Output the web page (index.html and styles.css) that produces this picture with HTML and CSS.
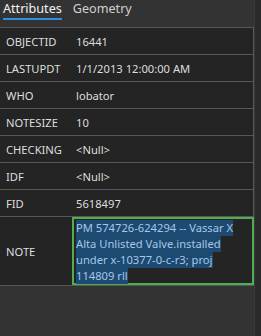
FILE: index.html
```html
<!DOCTYPE html>
<html>
<head>
<meta charset="utf-8">
<link rel="stylesheet" href="styles.css">
</head>
<body>
<div class="frame">
  <div class="main">
    <div class="tabs">
      <div class="tab active">Attributes</div>
      <div class="tab">Geometry</div>
    </div>
    <div class="table">
      <div class="row"><div class="key">OBJECTID</div><div class="val">16441</div></div>
      <div class="row"><div class="key">LASTUPDT</div><div class="val">1/1/2013 12:00:00 AM</div></div>
      <div class="row"><div class="key">WHO</div><div class="val">lobator</div></div>
      <div class="row"><div class="key">NOTESIZE</div><div class="val">10</div></div>
      <div class="row"><div class="key">CHECKING</div><div class="val">&lt;Null&gt;</div></div>
      <div class="row"><div class="key">IDF</div><div class="val">&lt;Null&gt;</div></div>
      <div class="row"><div class="key">FID</div><div class="val">5618497</div></div>
      <div class="row note-row">
        <div class="key">NOTE</div>
        <div class="editor">
          <div class="line"><span class="sel">PM 574726-624294 -- Vassar X</span></div>
          <div class="line"><span class="sel">Alta Unlisted Valve.installed</span></div>
          <div class="line"><span class="sel">under x-10377-0-c-r3; proj</span></div>
          <div class="line"><span class="sel">114809 rll</span></div>
        </div>
      </div>
    </div>
  </div>
  <div class="scroll"></div>
</div>
</body>
</html>
```
FILE: styles.css
```css
html, body {
  margin: 0;
  padding: 0;
  background: #333333;
  font-family: "Noto Sans", "Open Sans", sans-serif;
  color: #dedede;
}
.frame {
  display: flex;
  width: 261px;
  height: 336px;
}
.main {
  width: 254px;
}
.scroll {
  width: 7px;
  background: #2a2a2a;
  border-left: 1px solid #3a3a3a;
  box-sizing: border-box;
}
.tabs {
  height: 27px;
  display: flex;
  gap: 11px;
  padding-left: 3px;
  box-sizing: border-box;
}
.tab {
  font-size: 12.6px;
  line-height: 17px;
  color: #cfcfcf;
  height: 20px;
  box-sizing: border-box;
}
.tab.active {
  color: #f2f2f2;
  border-bottom: 2px solid #2f8fe0;
}
.table {
  background: #242424;
  border-right: 1px solid #575757;
  border-bottom: 1px solid #575757;
}
.row {
  display: flex;
  align-items: center;
  height: 27px;
  border-top: 1px solid #575757;
  box-sizing: border-box;
  font-size: 11.2px;
}
.key {
  width: 76px;
  padding-left: 6px;
  box-sizing: border-box;
}
.val {
  flex: 1;
}
.note-row {
  height: 69px;
  align-items: stretch;
}
.note-row .key {
  width: 72px;
  display: flex;
  align-items: center;
}
.editor {
  flex: 1;
  margin-right: -1px;
  border: 2px solid #4fae4f;
  padding: 1px 2px;
  font-size: 11.2px;
  line-height: 16px;
  color: #a5c8ea;
}
.line {
  height: 16px;
}
.sel {
  display: inline-block;
  height: 16px;
  line-height: 16px;
  background: #1d4a70;
}
```
